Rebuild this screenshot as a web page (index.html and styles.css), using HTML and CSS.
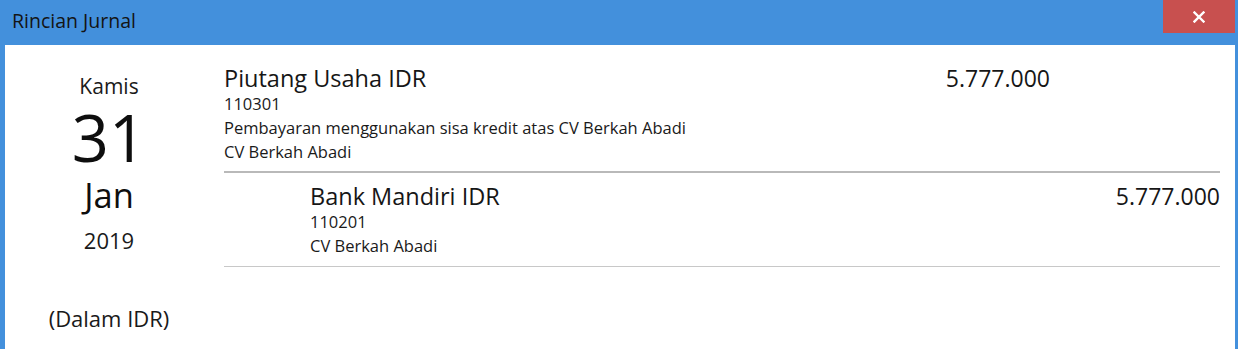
FILE: index.html
```html
<!DOCTYPE html>
<html>
<head>
<meta charset="utf-8">
<title>Rincian Jurnal</title>
<link rel="stylesheet" href="styles.css">
</head>
<body>
<div class="window">
  <div class="titlebar">
    <span class="title">Rincian Jurnal</span>
    <button class="close" aria-label="Tutup">
      <svg width="12" height="12" viewBox="0 0 12 12"><path d="M1.5 1.5 L10.5 10.5 M10.5 1.5 L1.5 10.5" stroke="#fff" stroke-width="2.4" stroke-linecap="square"/></svg>
    </button>
  </div>
  <div class="content">
    <div class="datecol">
      <div class="day">Kamis</div>
      <div class="date">31</div>
      <div class="month">Jan</div>
      <div class="year">2019</div>
      <div class="currency">(Dalam IDR)</div>
    </div>
    <div class="entries">
      <div class="entry debit">
        <div class="info">
          <div class="account">Piutang Usaha IDR</div>
          <div class="line">110301</div>
          <div class="line">Pembayaran menggunakan sisa kredit atas CV Berkah Abadi</div>
          <div class="line">CV Berkah Abadi</div>
        </div>
        <div class="amount dr">5.777.000</div>
        <div class="amount cr"></div>
      </div>
      <div class="entry credit">
        <div class="info">
          <div class="account">Bank Mandiri IDR</div>
          <div class="line">110201</div>
          <div class="line">CV Berkah Abadi</div>
        </div>
        <div class="amount dr"></div>
        <div class="amount cr">5.777.000</div>
      </div>
    </div>
  </div>
</div>
</body>
</html>
```
FILE: styles.css
```css
html, body {
  margin: 0;
  padding: 0;
  height: 100%;
}
body {
  font-family: "Open Sans", "Noto Sans", sans-serif;
  color: #1a1a1a;
  background: #4390dc;
}
.window {
  height: 349px;
  display: flex;
  flex-direction: column;
  background: #4390dc;
  position: relative;
}
.titlebar {
  height: 45px;
  flex: none;
  display: flex;
  align-items: flex-start;
}
.title {
  margin: 7px 0 0 12px;
  font-size: 19.5px;
  line-height: 28px;
  color: #141414;
}
.close {
  position: absolute;
  top: 0;
  right: 3px;
  width: 72px;
  height: 33px;
  border: 0;
  padding: 0;
  background: #c8504f;
  display: flex;
  align-items: center;
  justify-content: center;
}
.content {
  flex: 1;
  margin: 0 3px 0 5px;
  background: #fff;
  display: flex;
}
.datecol {
  width: 208px;
  flex: none;
  text-align: center;
  color: #0e0e0e;
  padding-top: 26px;
  box-sizing: border-box;
}
.day {
  font-size: 21px;
  line-height: 30px;
  color: #1a1a1a;
}
.date {
  font-size: 65px;
  line-height: 72px;
}
.month {
  font-size: 34.5px;
  line-height: 44px;
}
.year {
  font-size: 22px;
  line-height: 30px;
  margin-top: 8px;
  color: #1a1a1a;
}
.currency {
  font-size: 22px;
  line-height: 30px;
  margin-top: 48px;
  color: #1a1a1a;
}
.entries {
  flex: 1;
  margin-left: 11px;
  margin-right: 15px;
  padding-top: 11px;
}
.entry {
  display: grid;
  grid-template-columns: 1fr 170px 170px;
  padding: 8px 0 7px;
}
.entry.debit {
  border-bottom: 2px solid #b9b9b9;
}
.entry.credit {
  padding: 9px 0 8px;
  border-bottom: 1px solid #c8c8c8;
}
.entry.credit .info {
  padding-left: 86px;
}
.account {
  font-size: 23.5px;
  line-height: 28px;
  color: #161616;
}
.line {
  font-size: 16.5px;
  line-height: 24px;
  color: #1a1a1a;
}
.amount {
  font-size: 23px;
  line-height: 28px;
  text-align: right;
  color: #161616;
}
```
